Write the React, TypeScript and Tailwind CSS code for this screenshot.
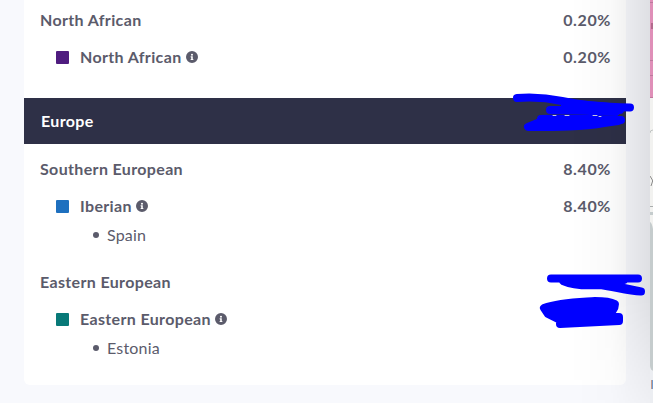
import type { ReactNode } from "react";

type Group = {
  name: string;
  value?: string;
  population: string;
  swatch: string;
  places?: string[];
};

const InfoIcon = () => (
  <svg viewBox="8 8 496 496" className="ml-[4px] h-[12px] w-[12px] shrink-0" fill="currentColor">
    <path d="M256 8a248 248 0 1 0 0 496 248 248 0 0 0 0-496Zm0 110a42 42 0 1 1 0 84 42 42 0 0 1 0-84Zm56 254c0 7-5 12-12 12h-88c-7 0-12-5-12-12v-24c0-7 5-12 12-12h12v-64h-12c-7 0-12-5-12-12v-24c0-7 5-12 12-12h64c7 0 12 5 12 12v100h12c7 0 12 5 12 12v24Z" />
  </svg>
);

const Row = ({ children, value }: { children: ReactNode; value?: string }) => (
  <div className="flex h-6 items-center justify-between pr-[15px] pl-4 font-bold">
    <div className="flex items-center">{children}</div>
    {value && <span className="tracking-[0.6px]">{value}</span>}
  </div>
);

const EthnicityGroup = ({ name, value, population, swatch, places = [] }: Group) => (
  <section>
    <Row value={value}>{name}</Row>
    <div className="mt-[13px]">
      <Row value={value}>
        <span className={`mr-[11px] ml-[16px] h-[13px] w-[13px] rounded-[1px] ${swatch}`} />
        {population}
        <InfoIcon />
      </Row>
    </div>
    {places.map((place) => (
      <div key={place} className="mt-[5px] flex h-6 items-center pl-[69px] tracking-[0.2px]">
        <span className="mr-[8px] h-[6px] w-[6px] rounded-full bg-[#5b5b6b]" />
        {place}
      </div>
    ))}
  </section>
);

const MapPanel = () => (
  <aside className="h-[403px] w-[3px] shrink-0 overflow-hidden">
    <svg width="3" height="403" viewBox="0 0 3 403">
      <rect width="3" height="403" fill="#f2f2f0" />
      <rect width="3" height="97" fill="#df8fb8" />
      <path d="M0 2.5h3M0 60.5h3M0 75.5h3M0 97.5h3" stroke="#bd7a9d" />
      <rect x="1" y="23" width="2" height="6" fill="#b36a8d" />
      <path d="M0 133q0-3 3-3" stroke="#bfc3c2" fill="none" />
      <path d="M0 176l3 5M3 180l-2 6" stroke="#8b8b8b" fill="none" />
      <path d="M0 206.500h3" stroke="#a9adad" />
      <path d="M0 212h3v3H0ZM0 222q2 1 3 7V234H0Z" fill="#c5cccd" />
      <path d="M0 234h3v137q-3-1-3-5Z" fill="#c5cccd" />
      <path d="M0 366q0 4 3 5v32H0Z" fill="#eceef2" />
      <rect x="1" y="380" width="1" height="9" fill="#c99c8d" />
      <rect x="2" y="380" width="1" height="9" fill="#6f9bd0" />
    </svg>
  </aside>
);

// Pen strokes laid over the hidden percentages
const Scribbles = () => (
  <svg
    className="pointer-events-none absolute inset-0"
    width="653"
    height="403"
    fill="#0000ff"
    stroke="#0000ff"
    strokeWidth="8"
    strokeLinecap="round"
    strokeLinejoin="round"
  >
    <path fill="none" d="M517 98C530 97 548 98 562 101C585 106 605 107 630 107.500" />
    <path fill="none" d="M550 110H620M541 119C570 117 600 120 621 120" />
    <path d="M528 127C555 127 583 127 604 123L618 121L590 119L545 120Z" />
    <path d="M565 103L620 108L616 112L565 110Z" />
    <path fill="none" stroke="#c9c9dc" strokeWidth="1" d="M553 115.500h3M565 115.500h4M593 115.500h4M599 116.500h2" />
    <path d="M551 278.500H638M563 281C572 285 585 286 600 285C615 287 628 291 641 291.500L600 283L624 280Z" />
    <path d="M544 308C560 302 580 302 595 301C604 301 611 302 615 304C615 309 610 314 605 317H619V321C600 322 580 323 560 324L560 320L548 314Z" />
  </svg>
);

const App = () => {
  return (
    <div className="relative flex h-[403px] w-[653px] overflow-hidden bg-[#f8f9fd] font-['Lato','Open_Sans',sans-serif] text-[16px] leading-6 tracking-[0.35px] text-[#5b5b6b]">
      <main className="ml-6 h-[385px] w-[602px] shrink-0 rounded-b-md bg-white pt-[8px]">
        <EthnicityGroup name="North African" value="0.20%" population="North African" swatch="bg-[#4f1c7f]" />
        <header className="mt-[29px] flex h-[46px] items-center bg-[#2e3047] pb-px pl-[17px] font-bold text-white">
          Europe
        </header>
        <div className="flex flex-col gap-[23px] pt-[13px]">
          <EthnicityGroup
            name="Southern European"
            value="8.40%"
            population="Iberian"
            swatch="bg-[#1e70bf]"
            places={["Spain"]}
          />
          <EthnicityGroup
            name="Eastern European"
            population="Eastern European"
            swatch="bg-[#087978]"
            places={["Estonia"]}
          />
        </div>
      </main>
      <div className="w-6 shrink-0" />
      <MapPanel />
      {/* Shadow cast by the map panel */}
      <div className="pointer-events-none absolute inset-y-0 right-[3px] w-[80px] bg-linear-to-r from-transparent via-black/2 to-black/10 mask-b-from-[300px] mask-b-to-[460px]" />
      <Scribbles />
    </div>
  );
};

export default App;
